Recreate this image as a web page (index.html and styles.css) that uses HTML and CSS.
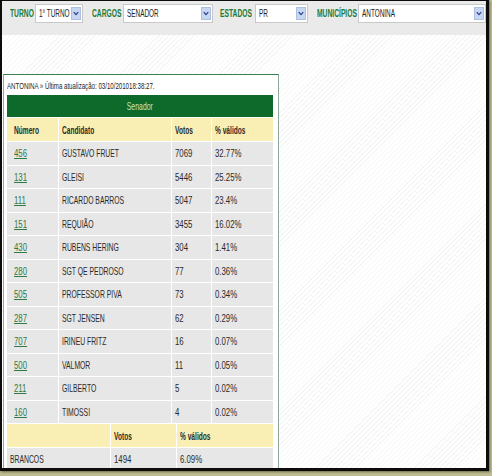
FILE: index.html
```html
<!DOCTYPE html>
<html lang="pt">
<head>
<meta charset="utf-8">
<link rel="stylesheet" href="styles.css">
</head>
<body>
<div class="frame">
  <div class="toolbar">
    <span class="lbl l-turno"><span class="t">TURNO</span></span>
    <div class="sel w-turno"><span class="val"><span class="t">1° TURNO</span></span><span class="arr"><svg viewBox="0 0 8 6" width="6" height="5"><path d="M1 1.2 L4 4.5 L7 1.2" fill="none" stroke="#1f3f8f" stroke-width="1.6"/></svg></span></div>
    <span class="lbl l-cargo"><span class="t">CARGOS</span></span>
    <div class="sel w-cargo"><span class="val"><span class="t">SENADOR</span></span><span class="arr"><svg viewBox="0 0 8 6" width="6" height="5"><path d="M1 1.2 L4 4.5 L7 1.2" fill="none" stroke="#1f3f8f" stroke-width="1.6"/></svg></span></div>
    <span class="lbl l-uf"><span class="t">ESTADOS</span></span>
    <div class="sel w-uf"><span class="val"><span class="t">PR</span></span><span class="arr"><svg viewBox="0 0 8 6" width="6" height="5"><path d="M1 1.2 L4 4.5 L7 1.2" fill="none" stroke="#1f3f8f" stroke-width="1.6"/></svg></span></div>
    <span class="lbl l-mun"><span class="t">MUNICÍPIOS</span></span>
    <div class="sel w-mun"><span class="val"><span class="t">ANTONINA</span></span><span class="arr"><svg viewBox="0 0 8 6" width="6" height="5"><path d="M1 1.2 L4 4.5 L7 1.2" fill="none" stroke="#1f3f8f" stroke-width="1.6"/></svg></span></div>
  </div>
  <div class="stage">
    <div class="panel">
      <p class="crumb"><span class="t">ANTONINA » Última atualização: 03/10/201018:38:27.</span></p>
      <table class="results">
        <colgroup><col class="c-num"><col class="c-cand"><col class="c-vot"><col class="c-pct"></colgroup>
        <tr><th colspan="4" class="office"><span class="t">Senador</span></th></tr>
        <tr class="head"><th class="first"><span class="t">Número</span></th><th><span class="t">Candidato</span></th><th><span class="t">Votos</span></th><th><span class="t">% válidos</span></th></tr>
        <tr><td class="first"><a href="#" class="n">456</a></td><td><span class="t">GUSTAVO FRUET</span></td><td><span class="n">7069</span></td><td><span class="n">32.77%</span></td></tr>
        <tr><td class="first"><a href="#" class="n">131</a></td><td><span class="t">GLEISI</span></td><td><span class="n">5446</span></td><td><span class="n">25.25%</span></td></tr>
        <tr><td class="first"><a href="#" class="n">111</a></td><td><span class="t">RICARDO BARROS</span></td><td><span class="n">5047</span></td><td><span class="n">23.4%</span></td></tr>
        <tr><td class="first"><a href="#" class="n">151</a></td><td><span class="t">REQUIÃO</span></td><td><span class="n">3455</span></td><td><span class="n">16.02%</span></td></tr>
        <tr><td class="first"><a href="#" class="n">430</a></td><td><span class="t">RUBENS HERING</span></td><td><span class="n">304</span></td><td><span class="n">1.41%</span></td></tr>
        <tr><td class="first"><a href="#" class="n">280</a></td><td><span class="t">SGT QE PEDROSO</span></td><td><span class="n">77</span></td><td><span class="n">0.36%</span></td></tr>
        <tr><td class="first"><a href="#" class="n">505</a></td><td><span class="t">PROFESSOR PIVA</span></td><td><span class="n">73</span></td><td><span class="n">0.34%</span></td></tr>
        <tr><td class="first"><a href="#" class="n">287</a></td><td><span class="t">SGT JENSEN</span></td><td><span class="n">62</span></td><td><span class="n">0.29%</span></td></tr>
        <tr><td class="first"><a href="#" class="n">707</a></td><td><span class="t">IRINEU FRITZ</span></td><td><span class="n">16</span></td><td><span class="n">0.07%</span></td></tr>
        <tr><td class="first"><a href="#" class="n">500</a></td><td><span class="t">VALMOR</span></td><td><span class="n">11</span></td><td><span class="n">0.05%</span></td></tr>
        <tr><td class="first"><a href="#" class="n">211</a></td><td><span class="t">GILBERTO</span></td><td><span class="n">5</span></td><td><span class="n">0.02%</span></td></tr>
        <tr><td class="first"><a href="#" class="n">160</a></td><td><span class="t">TIMOSSI</span></td><td><span class="n">4</span></td><td><span class="n">0.02%</span></td></tr>
      </table>
      <table class="totals">
        <colgroup><col class="t-lbl"><col class="t-vot"><col class="t-pct"></colgroup>
        <tr class="head"><th></th><th><span class="t">Votos</span></th><th><span class="t">% válidos</span></th></tr>
        <tr><td><span class="t">BRANCOS</span></td><td><span class="n">1494</span></td><td><span class="n">6.09%</span></td></tr>
      </table>
    </div>
  </div>
</div>
</body>
</html>
```
FILE: styles.css
```css
html, body {
  margin: 0;
  padding: 0;
}
body {
  width: 492px;
  height: 476px;
  background: #bdbb90;
  overflow: hidden;
  font-family: "Liberation Sans", Arial, sans-serif;
}
.t, .n {
  display: inline-block;
  transform-origin: 0 50%;
  white-space: nowrap;
}
.t { transform: scaleX(0.62); }
.n { transform: scaleX(0.71); }
.frame {
  box-sizing: border-box;
  width: 489px;
  height: 471px;
  border: 2px solid #0c0c0c;
  border-top-width: 1px;
  border-right-width: 3px;
  border-bottom-width: 3px;
  overflow: hidden;
  box-shadow: 1px 1px 2px #6f6d45;
  display: flex;
  flex-direction: column;
}
.toolbar {
  height: 34px;
  flex: none;
  box-sizing: border-box;
  background: #eaeaea;
  display: flex;
  align-items: flex-start;
  padding: 3px 0 0 8px;
  white-space: nowrap;
}
.lbl {
  color: #1d7a35;
  font-weight: bold;
  font-size: 10.5px;
  line-height: 19px;
  flex: none;
  overflow: visible;
}
.lbl .t { transform: scaleX(0.64); }
.l-turno { width: 25px; }
.l-cargo { width: 31px; }
.l-uf { width: 35px; }
.l-mun { width: 41px; }
.sel {
  box-sizing: border-box;
  height: 19px;
  background: #fff;
  border: 1px solid #c9c9c9;
  display: flex;
  align-items: stretch;
  flex: none;
}
.sel .val {
  flex: 1;
  min-width: 0;
  font-size: 10.5px;
  color: #222;
  line-height: 17px;
  padding-left: 3px;
}
.sel .t { transform: scaleX(0.61); }
.sel .arr {
  flex: none;
  width: 8px;
  margin: 2px 1px 2px 0;
  background: #c8d7f1;
  border: 1px solid #adc0e2;
  display: flex;
  align-items: center;
  justify-content: center;
}
.w-turno { width: 48px; margin-right: 9px; }
.w-cargo { width: 90px; margin-right: 7px; }
.w-uf { width: 53px; margin-right: 9px; }
.w-mun { width: 128px; }
.stage {
  flex: 1;
  background: repeating-linear-gradient(135deg, #ffffff 0, #ffffff 2.5px, #f6f6f6 2.5px, #f6f6f6 3.5px);
  padding: 39px 0 0 1px;
}
.panel {
  box-sizing: border-box;
  width: 276px;
  height: 420px;
  background: #fff;
  border-top: 1px solid #3f7f52;
  border-left: 1px solid #8fa99b;
  border-right: 1px solid #8fa99b;
  padding: 6px 0 0 2px;
}
.crumb {
  margin: 0 0 2px 1px;
  font-size: 9px;
  color: #1c1c1c;
  line-height: 11px;
  white-space: nowrap;
}
.crumb .t { transform: scaleX(0.68); }
table {
  border-collapse: separate;
  border-spacing: 1px;
  font-size: 11px;
  color: #2a2a2a;
  table-layout: fixed;
}
.results { width: 268px; }
th, td {
  padding: 0 0 0 3px;
  text-align: left;
  white-space: nowrap;
  overflow: visible;
}
th.first, td.first { padding-left: 7px; }
.office {
  background: #0d6a2a;
  color: #c6e4c2;
  font-weight: normal;
  text-align: center;
  height: 22px;
  padding: 0;
}
.office .t { transform-origin: 50% 50%; transform: scaleX(0.63); }
.head th {
  background: #f9efb4;
  color: #2a2a2a;
  font-weight: bold;
  height: 23px;
}
.head .t { transform: scaleX(0.6); }
td {
  background: #e7e7e7;
  height: 22.5px;
}
.c-num { width: 51px; }
.c-cand { width: 112px; }
.c-vot { width: 39px; }
.c-pct { width: 61px; }
a {
  color: #2f7a45;
  text-decoration: underline;
}
.totals {
  width: 268px;
  margin-top: -1px;
}
.totals td:first-child { padding-left: 3px; }
.t-lbl { width: 103px; }
.t-vot { width: 64px; }
.t-pct { width: 96px; }
```
